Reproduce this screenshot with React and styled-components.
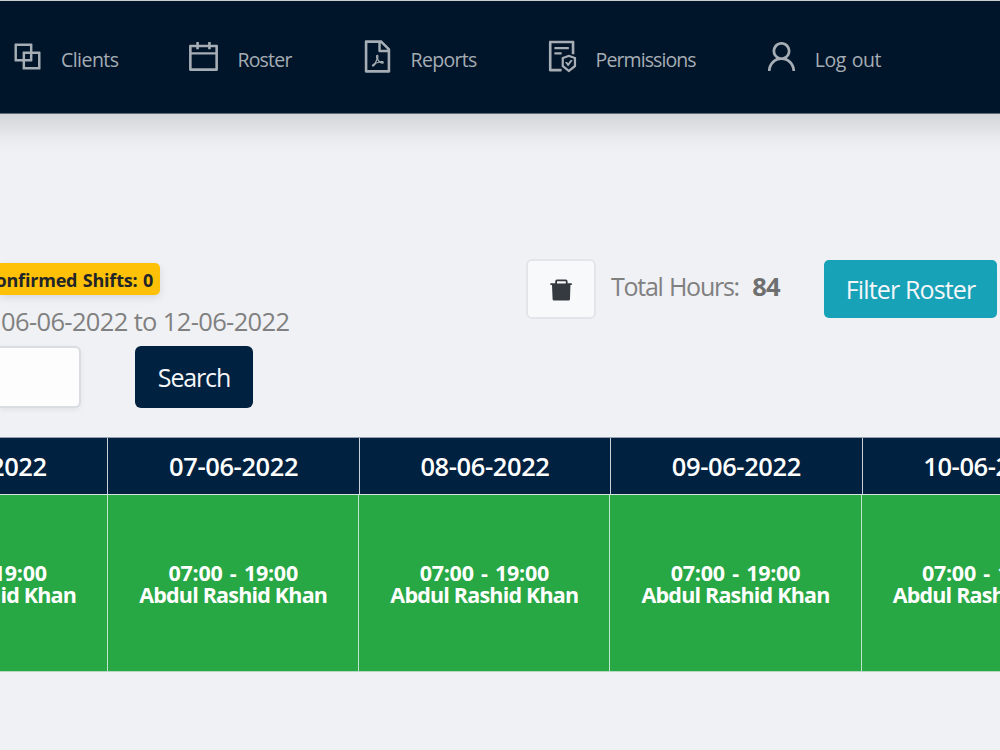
import styled, { createGlobalStyle } from 'styled-components';
import {
  AiOutlineBlock,
  AiOutlineCalendar,
  AiOutlineFilePdf,
  AiOutlineFileProtect,
  AiOutlineUser,
} from 'react-icons/ai';

const navItems = [
  { label: 'Clients', icon: AiOutlineBlock, tracking: -0.55 },
  { label: 'Roster', icon: AiOutlineCalendar, tracking: -0.8 },
  { label: 'Reports', icon: AiOutlineFilePdf, tracking: -0.7 },
  { label: 'Permissions', icon: AiOutlineFileProtect, tracking: -0.9 },
  { label: 'Log out', icon: AiOutlineUser, tracking: -0.4 },
];

const shifts = [
  { date: '06-06-2022', time: '07:00 - 19:00', name: 'Abdul Rashid Khan' },
  { date: '07-06-2022', time: '07:00 - 19:00', name: 'Abdul Rashid Khan' },
  { date: '08-06-2022', time: '07:00 - 19:00', name: 'Abdul Rashid Khan' },
  { date: '09-06-2022', time: '07:00 - 19:00', name: 'Abdul Rashid Khan' },
  { date: '10-06-2022', time: '07:00 - 19:00', name: 'Abdul Rashid Khan' },
];

const TrashIcon = () => (
  <svg width="24" height="24" viewBox="0 0 24 24" fill="#343a40">
    <path d="M1.4 6.2h4.8V4.4Q6.2 2.6 8 2.6h8.8Q18.6 2.6 18.6 4.4v1.8h4.2v1.7h-1.4L21 22.2q-.1 1.3-1.4 1.3H5q-1.3 0-1.4-1.3L3 7.9H1.4zM8 4.3v2.3h8.8V4.3z" />
  </svg>
);

const App = () => {
  return (
    <Page>
      <GlobalStyle />
      <Navbar>
        {navItems.map(({ label, icon: Icon, tracking }) => (
          <NavItem key={label}>
            <Icon size={37} />
            <NavLabel $tracking={tracking}>{label}</NavLabel>
          </NavItem>
        ))}
      </Navbar>

      <Toolbar>
        <Filters>
          <Badge>Unconfirmed Shifts: 0</Badge>
          <DateRange>06-06-2022 to 12-06-2022</DateRange>
          <SearchRow>
            <SearchInput aria-label="Search roster" />
            <SearchButton>Search</SearchButton>
          </SearchRow>
        </Filters>
        <Actions>
          <TrashButton aria-label="Delete">
            <TrashIcon />
          </TrashButton>
          <Total>
            Total Hours: <b>84</b>
          </Total>
          <FilterButton>Filter Roster</FilterButton>
        </Actions>
      </Toolbar>

      <Roster>
        <HeadRow>
          {shifts.map((shift) => (
            <HeadCell key={shift.date}>{shift.date}</HeadCell>
          ))}
        </HeadRow>
        <ShiftRow>
          {shifts.map((shift) => (
            <ShiftCell key={shift.date}>
              <ShiftTime>{shift.time}</ShiftTime>
              <ShiftName>{shift.name}</ShiftName>
            </ShiftCell>
          ))}
        </ShiftRow>
      </Roster>
    </Page>
  );
};

// Styled Components
const GlobalStyle = createGlobalStyle`
  * {
    box-sizing: border-box;
  }

  body {
    margin: 0;
    background: #f0f1f5;
    font-family: 'Open Sans', 'Noto Sans', sans-serif;
  }

  button {
    font-family: inherit;
    margin: 0;
    padding: 0;
  }
`;

const Page = styled.div`
  width: 1000px;
  height: 750px;
  overflow: hidden;
  white-space: nowrap;
`;

const Navbar = styled.nav`
  display: flex;
  gap: 67px;
  width: 1060px;
  height: 114px;
  margin-left: -30px;
  padding: 37px 0 0 39px;
  background: #001529;
  border-top: 1px solid #c9cccd;
  border-bottom: 1px solid #5f6b75;
  box-shadow: 0 13px 26px rgba(0, 0, 0, 0.14);
`;

const NavItem = styled.div`
  display: flex;
  gap: 15px;
  height: 37px;
  color: #a6adb4;
`;

const NavLabel = styled.span`
  font-size: 19.5px;
  line-height: 43px;
  letter-spacing: ${props => props.$tracking}px;
  word-spacing: 1px;
`;

const Toolbar = styled.div`
  display: flex;
  justify-content: space-between;
  height: 323px;
  padding: 145px 3px 0 0;
`;

const Filters = styled.div`
  display: flex;
  flex-direction: column;
  align-items: flex-start;
  width: 300px;
  padding-top: 4px;
`;

const Badge = styled.span`
  display: flex;
  justify-content: flex-end;
  width: 160px;
  height: 32px;
  padding-right: 7px;
  border-radius: 0 5px 5px 0;
  background: #ffc107;
  box-shadow: 0 3px 8px rgba(0, 0, 0, 0.1);
  color: #212529;
  font-size: 18px;
  font-weight: 700;
  line-height: 34px;
  letter-spacing: -0.2px;
  word-spacing: 1px;
`;

const DateRange = styled.div`
  height: 51px;
  padding-left: 1px;
  color: #808080;
  font-size: 25.5px;
  line-height: 53px;
  letter-spacing: -0.64px;
`;

const SearchRow = styled.div`
  display: flex;
  gap: 54px;
`;

const SearchInput = styled.input`
  width: 81px;
  height: 62px;
  border: 2px solid #d9dce1;
  border-left: none;
  border-radius: 0 6px 6px 0;
  background: #fdfdfe;
  box-shadow: 0 2px 5px rgba(0, 0, 0, 0.06);
`;

const SearchButton = styled.button`
  width: 118px;
  height: 62px;
  border: none;
  border-radius: 6px;
  background: #002140;
  color: #f5f6f8;
  font-size: 25px;
  line-height: 62px;
  letter-spacing: -1.15px;
`;

const Actions = styled.div`
  display: flex;
  align-items: flex-start;
`;

const TrashButton = styled.button`
  display: flex;
  align-items: center;
  justify-content: center;
  width: 70px;
  height: 60px;
  border: 2px solid #e4e5ea;
  border-radius: 6px;
  background: #f8f9fa;
`;

const Total = styled.div`
  width: 228px;
  padding-left: 15px;
  color: #808080;
  font-size: 25px;
  line-height: 54px;
  letter-spacing: -1.25px;
  word-spacing: 1px;

  b {
    margin-left: 7px;
    color: #6f6f6f;
    font-size: 25.5px;
    letter-spacing: -0.7px;
  }
`;

const FilterButton = styled.button`
  width: 173px;
  height: 58px;
  margin-top: 1px;
  border: none;
  border-radius: 5px;
  background: #17a2b8;
  color: #f5f6f8;
  font-size: 25px;
  line-height: 58px;
  letter-spacing: -0.85px;
`;

const Roster = styled.div`
  width: 1260px;
`;

const HeadRow = styled.div`
  display: grid;
  grid-template-columns: repeat(5, 251.4px);
  height: 58px;
  margin-left: -143px;
  border-top: 1px solid #96a1ad;
  border-bottom: 1px solid #d6e4df;
  background: #002140;
`;

const HeadCell = styled.div`
  border-right: 1px solid #ccd1d7;
  color: #ffffff;
  font-size: 25.5px;
  font-weight: 600;
  line-height: 56px;
  text-align: center;
  letter-spacing: -0.4px;
`;

const ShiftRow = styled.div`
  display: grid;
  grid-template-columns: repeat(5, 251.15px);
  height: 177px;
  margin-left: -143px;
  border-bottom: 1px solid #b5d9c1;
  background: #28a745;
`;

const ShiftCell = styled.div`
  padding-top: 67px;
  border-right: 1px solid #c0e3cb;
  color: #ffffff;
  font-size: 21.5px;
  font-weight: 700;
  line-height: 21.5px;
  text-align: center;
`;

const ShiftTime = styled.div`
  letter-spacing: -0.25px;
  word-spacing: 2px;
`;

const ShiftName = styled.div`
  letter-spacing: -0.8px;
`;

export default App;
